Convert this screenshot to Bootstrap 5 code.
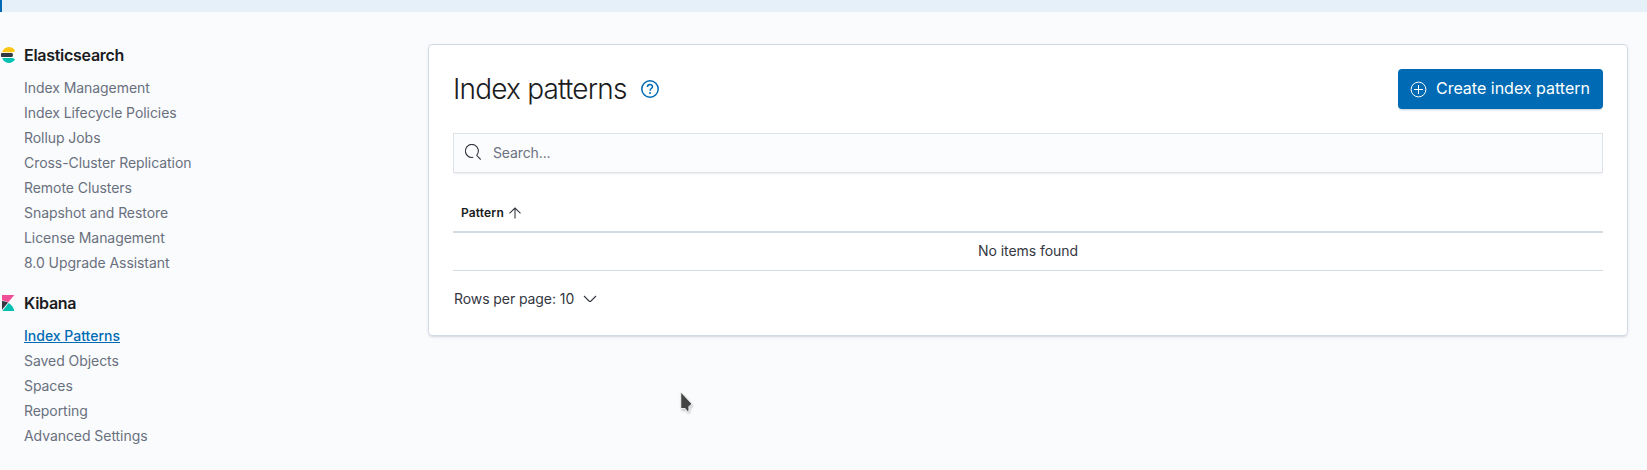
<!DOCTYPE html>
<html lang="en">
<head>
<meta charset="utf-8">
<meta name="viewport" content="width=device-width, initial-scale=1">
<title>Index patterns</title>
<link rel="stylesheet" href="https://cdn.jsdelivr.net/npm/bootstrap@5.3.0/dist/css/bootstrap.min.css">
<style>
body{font-family:Inter,"Liberation Sans",sans-serif;font-size:14px;line-height:25px;color:#343741;background:#fafbfd;height:470px;overflow:hidden;letter-spacing:-.04px}
svg{display:block;flex:none}
.callout-strip{height:12px;background:#e6f0f8;border-left:2px solid #006bb4}
.side{width:428px;padding-top:31px}
.side h2{font-size:16px;font-weight:600;line-height:24px;color:#1a1c21;margin:0 0 8px;letter-spacing:-.28px}
.side h2 svg{width:24px;height:16px}
.side .nav{padding-left:24px}
.side .nav-link{padding:0;color:#69707d;line-height:25px;letter-spacing:-.06px}
.side .nav-link.active{color:#006bb4;font-weight:500;text-decoration:underline;letter-spacing:0}
.side .group-gap{margin-top:16px}
.panel{width:1200px;height:292px;margin-top:32px;padding:24px;border:1px solid #d3dae6;border-radius:4px;box-shadow:0 2px 2px -1px rgba(152,162,179,.3),0 1px 5px -2px rgba(152,162,179,.3)}
.panel h1{font-size:28px;font-weight:300;line-height:40px;color:#1a1c21;margin:0;letter-spacing:-.8px}
.help-icon{margin-left:14px}
.btn-create{width:205px;height:40px;padding:0 13px 0 12px;background:#006bb4;border:0;border-radius:4px;color:#fff;font-size:16px;letter-spacing:0;box-shadow:0 2px 2px -1px rgba(54,97,126,.3)}
.btn-create:hover{background:#006bb4;color:#fff}
.btn-create span{padding-bottom:2px}
.search{height:40px;margin-top:24px;padding-left:11px;background:#fbfcfd;border:1px solid #dfe2e7;box-shadow:0 2px 2px -1px rgba(152,162,179,.2)}
.search svg{margin-bottom:2px}
.search input{font-size:14px;padding:0 0 2px;border:0;background:transparent!important;box-shadow:none!important;letter-spacing:-.12px}
.search input::placeholder{color:#6b7280}
.pattern-table{margin:16px 0 0;color:#343741;--bs-table-bg:transparent;border-collapse:separate;border-spacing:0}
.pattern-table th{height:44px;padding:6px 8px 0;font-size:12px;font-weight:600;line-height:18px;color:#1a1c21;vertical-align:middle;border-bottom:2px solid #d3dae6;letter-spacing:.15px}
.pattern-table td{height:38px;padding:0 0 1px;line-height:20px;vertical-align:middle;border-bottom:1px solid #d3dae6}
.rows-btn{margin-top:15px;padding:0 1px;border:0;font-size:14px;line-height:25px;color:#343741;letter-spacing:-.08px}
.pointer{left:680px;top:390px;filter:drop-shadow(1px 2px 1px rgba(0,0,0,.2))}
</style>
</head>
<body class="position-relative">
<div class="callout-strip"></div>
<div class="d-flex">
  <aside class="side flex-shrink-0 pe-3">
    <h2 class="d-flex align-items-center">
      <svg viewBox="0 0 24 16"><path d="M2.200 5.200A7.300 7.300 0 0 1 8.700 0q3.900 0 6.300 3.400q-.7 1.800-2.500 1.800z" fill="#fec514"/><path d="M1.200 6h10.400q1.400 0 1.400 2t-1.400 2H1.200q-.6-2 0-4" fill="#343741"/><path d="M2.200 11h10.300q1.800 0 2.500 1.600Q12.600 16 8.700 16a7.300 7.300 0 0 1-6.500-5" fill="#00bfb3"/></svg>
      Elasticsearch</h2>
    <nav class="nav flex-column">
      <a class="nav-link">Index Management</a>
      <a class="nav-link">Index Lifecycle Policies</a>
      <a class="nav-link">Rollup Jobs</a>
      <a class="nav-link">Cross-Cluster Replication</a>
      <a class="nav-link">Remote Clusters</a>
      <a class="nav-link">Snapshot and Restore</a>
      <a class="nav-link">License Management</a>
      <a class="nav-link">8.0 Upgrade Assistant</a>
    </nav>
    <h2 class="group-gap d-flex align-items-center">
      <svg viewBox="0 0 24 16"><path d="M2 0h12.300L8.300 7.300Q5.500 5.600 2 5.600z" fill="#f04e98"/><path d="M2 6q3.500 0 6.100 1.500L2 14.700z" fill="#343741"/><path d="M8.700 8q4.700 3 5.500 8H2.300z" fill="#00bfb3"/></svg>
      Kibana</h2>
    <nav class="nav flex-column">
      <a class="nav-link active">Index Patterns</a>
      <a class="nav-link">Saved Objects</a>
      <a class="nav-link">Spaces</a>
      <a class="nav-link">Reporting</a>
      <a class="nav-link">Advanced Settings</a>
    </nav>
  </aside>
  <main class="panel bg-white flex-shrink-0">
    <div class="d-flex justify-content-between align-items-center">
      <div class="d-flex align-items-center">
        <h1>Index patterns</h1>
        <svg class="help-icon" width="18" height="18" viewBox="0 0 18 18" fill="none" stroke="#006bb4" stroke-width="1.500"><circle cx="9" cy="9" r="8.200"/><path d="M6.500 7c0-3.300 5-3.200 5-.3 0 1.800-2.500 1.800-2.500 4"/><circle cx="9" cy="13" r="1" fill="#006bb4" stroke="none"/></svg>
      </div>
      <button class="btn btn-create d-flex align-items-center justify-content-between">
        <svg width="17" height="17" viewBox="0 0 17 17" fill="none" stroke="#fff"><circle cx="8.500" cy="8.500" r="7.400"/><path d="M8.500 4v9M4 8.500h9"/></svg>
        <span>Create index pattern</span>
      </button>
    </div>
    <div class="search d-flex align-items-center">
      <svg width="16" height="16" viewBox="0 0 16 16" fill="none" stroke="#343741" stroke-width="1.100"><path d="M8.200 13.300A6.500 6.500 0 1 1 11.700 11.300L15.700 15.500"/></svg>
      <input class="form-control ms-2 ps-1" type="text" placeholder="Search...">
    </div>
    <table class="table pattern-table">
      <thead><tr><th><span class="d-flex align-items-center">Pattern
        <svg class="ms-1" width="14" height="12" viewBox="0 0 14 12" fill="none" stroke="#343741" stroke-width="1.100"><path d="M7 11.500V1M1.500 6.300 7 1l5.500 5.300"/></svg></span></th></tr></thead>
      <tbody><tr><td class="text-center">No items found</td></tr></tbody>
    </table>
    <button class="btn rows-btn d-flex align-items-center">Rows per page: 10
      <svg class="ms-2" width="16" height="16" viewBox="0 0 16 16" fill="none" stroke="#343741" stroke-width="1.100"><path d="m2 5 5 5q1 .8 2 0l5-5"/></svg>
    </button>
  </main>
</div>
<svg class="pointer position-absolute" width="14" height="24" viewBox="0 0 14 24"><path d="M.8 2v16.500h4.400L7.200 21.500 9 20.500 8.800 16.500 12 14z" fill="#444" stroke="#fff" stroke-width=".8"/></svg>
<script src="https://cdn.jsdelivr.net/npm/bootstrap@5.3.0/dist/js/bootstrap.bundle.min.js"></script>
</body>
</html>
